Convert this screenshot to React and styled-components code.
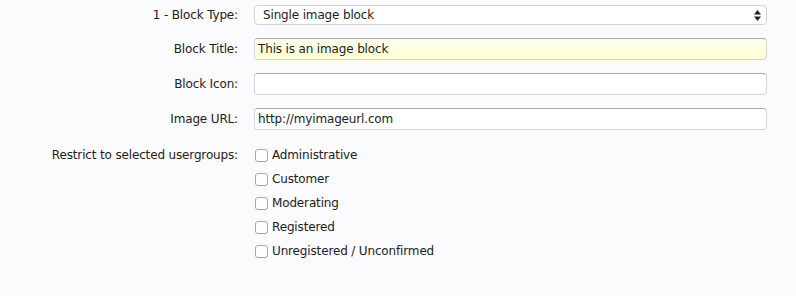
import React from 'react';
import styled, { createGlobalStyle } from 'styled-components';

const Global = createGlobalStyle`
  body {
    margin: 0;
    background: #fbfbfd;
    font-family: "DejaVu Sans", Tahoma, Verdana, sans-serif;
    font-size: 12px;
    letter-spacing: -0.15px;
    color: #222;
  }
`;

const Form = styled.form`
  display: grid;
  grid-template-columns: 238px 513px;
  column-gap: 16px;
  row-gap: 13px;
  padding-top: 5px;
  align-items: center;
`;

const Label = styled.label`
  text-align: right;
  color: #222;
  white-space: nowrap;
  align-self: ${p => (p.$top ? 'start' : 'center')};
  line-height: 16px;
  padding-top: ${p => (p.$top ? '4px' : '0')};
`;

const SelectBox = styled.div`
  height: 20px;
  box-sizing: border-box;
  border: 1px solid #d2d2d6;
  border-radius: 4px;
  background: #fff;
  display: flex;
  align-items: center;
  justify-content: space-between;
  padding: 0 5px 0 8px;
`;

const Arrows = styled.svg`
  width: 7px;
  height: 11px;
`;

const Input = styled.div`
  height: 22px;
  box-sizing: border-box;
  border: 1px solid #d4d4d8;
  border-top-color: #a9a9ad;
  border-radius: 4px;
  background: ${p => (p.$highlight ? 'linear-gradient(#fffff0, #ffffd0)' : '#fff')};
  display: flex;
  align-items: center;
  padding: 0 3px;
`;

const Checks = styled.div`
  align-self: start;
  display: flex;
  flex-direction: column;
  gap: 8px;
  margin-top: 4px;
`;

const CheckRow = styled.div`
  display: flex;
  align-items: center;
  gap: 4px;
  height: 16px;
`;

const Box = styled.span`
  width: 11px;
  height: 11px;
  margin-left: 1px;
  border: 1px solid #a6a6aa;
  border-radius: 3px;
  background: #fff;
`;

const groups = [
  'Administrative',
  'Customer',
  'Moderating',
  'Registered',
  'Unregistered / Unconfirmed',
];

export default function App() {
  return (
    <>
      <Global />
      <Form>
        <Label>1 - Block Type:</Label>
        <SelectBox>
          <span>Single image block</span>
          <Arrows viewBox="0 0 7 11">
            <path d="M3.5 0 L7 4.5 H0 Z" fill="#222" />
            <path d="M3.5 11 L7 6.5 H0 Z" fill="#222" />
          </Arrows>
        </SelectBox>

        <Label>Block Title:</Label>
        <Input $highlight>This is an image block</Input>

        <Label>Block Icon:</Label>
        <Input />

        <Label>Image URL:</Label>
        <Input>http://myimageurl.com</Input>

        <Label $top>Restrict to selected usergroups:</Label>
        <Checks>
          {groups.map(g => (
            <CheckRow key={g}>
              <Box />
              <span>{g}</span>
            </CheckRow>
          ))}
        </Checks>
      </Form>
    </>
  );
}
